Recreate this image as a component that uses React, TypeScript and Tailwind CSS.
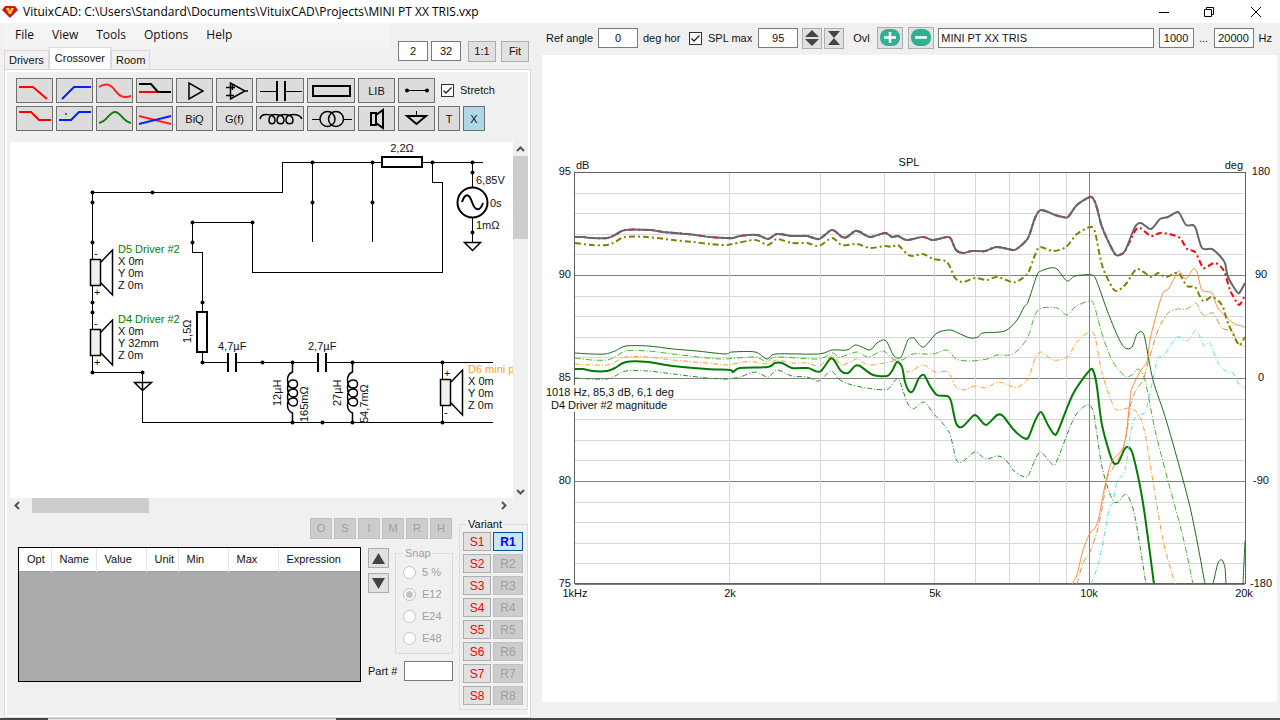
import { useState } from 'react';
import type { ReactNode } from 'react';

type Point = [number, number];

interface Curve {
  name: string;
  color: string;
  width: number;
  dash?: string;
  points: Point[];
}

// Total SPL, everything below the tweeter range is shared with the target curve
const totalBase: Point[] = [
  [575, 237], [583, 237], [592, 238], [607, 238], [615, 235], [625, 230], [650, 230], [663, 232], [687, 234],
  [710, 237], [725, 238], [733, 238], [740, 236], [757, 235], [768, 239], [777, 234], [792, 236], [807, 236],
  [819, 239], [832, 230], [842, 237], [847, 237], [855, 231], [860, 232], [870, 237], [885, 233], [892, 237],
  [898, 236], [907, 240], [923, 237], [933, 240], [947, 237], [951, 239], [956, 250], [963, 253], [972, 251],
  [985, 251], [997, 247], [1013, 250], [1018, 248], [1028, 238], [1035, 218], [1041, 210], [1055, 215],
  [1063, 217], [1068, 217], [1077, 205], [1090, 197], [1094, 200], [1097, 208], [1102, 227], [1112, 249],
  [1116, 255], [1119, 255], [1125, 251],
];

const curves: Curve[] = [
  {
    name: 'lower-off-axis', color: '#2a8f2a', width: 1, dash: '5 2 1 2',
    points: [
      [575, 378], [592, 379], [607, 379], [615, 376], [626, 371], [648, 371], [673, 374], [707, 378], [727, 379],
      [740, 377], [755, 372], [768, 377], [777, 370], [792, 376], [807, 377], [819, 381], [831, 371], [840, 380],
      [852, 385], [873, 389], [888, 389], [898, 379], [907, 402], [913, 409], [924, 402], [933, 413], [949, 432],
      [956, 459], [962, 462], [975, 452], [986, 459], [997, 456], [1005, 459], [1013, 470], [1022, 476],
      [1028, 476], [1035, 460], [1041, 452], [1053, 465], [1058, 458], [1073, 420], [1082, 408], [1089, 405],
      [1094, 415], [1102, 467], [1112, 499], [1118, 502], [1124, 495], [1128, 496], [1135, 517], [1146, 584],
    ],
  },
  {
    name: 'orange-off-axis', color: '#ff9a2e', width: 1, dash: '5 2 1 2',
    points: [
      [575, 364], [592, 365], [607, 365], [615, 362], [626, 357], [648, 357], [673, 360], [707, 363], [727, 365],
      [743, 362], [755, 362], [768, 364], [777, 360], [792, 363], [807, 363], [819, 366], [832, 356], [842, 365],
      [857, 359], [868, 365], [885, 363], [898, 361], [908, 372], [923, 365], [935, 372], [948, 372], [955, 386],
      [963, 390], [975, 386], [986, 388], [998, 382], [1013, 387], [1018, 387], [1028, 379], [1035, 359],
      [1041, 352], [1053, 360], [1067, 357], [1077, 342], [1089, 332], [1095, 337], [1102, 373], [1113, 405],
      [1118, 410], [1130, 408], [1139, 415], [1145, 433], [1150, 463], [1163, 540], [1175, 584],
    ],
  },
  {
    name: 'light-green', color: '#4caf30', width: 1, dash: '6 2 1 2',
    points: [
      [575, 358], [592, 360], [607, 360], [615, 357], [626, 351], [648, 351], [673, 354], [707, 358], [725, 359],
      [755, 357], [767, 362], [776, 357], [818, 359], [832, 353], [840, 357], [857, 352], [868, 357], [883, 351],
      [893, 359], [902, 360], [913, 354], [933, 354], [947, 350], [956, 359], [970, 361], [987, 359], [997, 355],
      [1010, 355], [1018, 350], [1028, 337], [1035, 315], [1042, 308], [1057, 308], [1067, 315], [1075, 307],
      [1089, 301], [1094, 305], [1103, 337], [1113, 362], [1125, 376], [1132, 375], [1138, 369], [1145, 380],
      [1155, 430], [1167, 477], [1183, 537], [1193, 584],
    ],
  },
  {
    name: 'dark-green', color: '#1b6b1b', width: 1,
    points: [
      [575, 353], [592, 354], [605, 354], [615, 351], [626, 346], [648, 346], [673, 349], [697, 351], [725, 354],
      [732, 352], [755, 352], [767, 359], [776, 354], [818, 354], [832, 350], [847, 350], [855, 345], [862, 347],
      [870, 350], [877, 343], [883, 340], [887, 342], [894, 356], [901, 357], [908, 340], [914, 338], [917, 342],
      [924, 347], [937, 333], [950, 330], [958, 333], [970, 338], [978, 337], [983, 333], [1005, 331],
      [1017, 320], [1024, 307], [1028, 302], [1037, 275], [1041, 271], [1050, 268], [1057, 269], [1067, 281],
      [1075, 276], [1092, 275], [1097, 282], [1107, 310], [1118, 337], [1125, 348], [1132, 347], [1137, 334],
      [1142, 332], [1145, 339], [1153, 380], [1167, 423], [1190, 507], [1205, 584],
    ],
  },
  {
    name: 'dark-green-lobe', color: '#1b6b1b', width: 1,
    points: [[1213, 584], [1218, 563], [1222, 560], [1225, 568], [1226, 584]],
  },
  { name: 'dark-green-edge', color: '#1b6b1b', width: 1, points: [[1243, 584], [1245, 541]] },
  {
    name: 'D4 Driver #2 magnitude', color: '#007d00', width: 2,
    points: [
      [575, 369], [583, 369], [592, 371], [607, 371], [615, 368], [626, 362], [648, 362], [673, 366], [707, 369],
      [730, 370], [733, 372], [740, 368], [768, 367], [775, 363], [782, 363], [792, 368], [808, 368], [815, 371],
      [821, 371], [830, 359], [834, 360], [841, 371], [848, 373], [855, 366], [860, 366], [873, 375], [887, 376],
      [892, 371], [897, 362], [902, 367], [905, 382], [909, 391], [913, 391], [919, 378], [924, 375], [930, 386],
      [937, 395], [947, 396], [951, 401], [956, 423], [962, 427], [973, 416], [977, 416], [986, 425], [997, 415],
      [1003, 416], [1013, 429], [1022, 437], [1028, 438], [1035, 421], [1041, 412], [1048, 425], [1054, 434],
      [1058, 431], [1073, 394], [1090, 370], [1094, 373], [1097, 387], [1102, 425], [1112, 460], [1118, 463],
      [1124, 450], [1128, 447], [1133, 455], [1143, 503], [1154, 584],
    ],
  },
  {
    name: 'cyan-off-axis', color: '#5ee0dc', width: 1, dash: '5 2 1 2',
    points: [
      [1091, 584], [1098, 565], [1104, 537], [1109, 510], [1113, 502], [1117, 482], [1125, 470], [1130, 437],
      [1135, 418], [1145, 412], [1150, 393], [1155, 370], [1158, 358], [1165, 354], [1177, 337], [1187, 341],
      [1196, 330], [1200, 337], [1204, 346], [1210, 343], [1218, 363], [1227, 372], [1233, 373], [1238, 383],
      [1245, 388],
    ],
  },
  {
    name: 'tan-off-axis', color: '#c8963c', width: 1, dash: '6 2 1 2',
    points: [
      [1077, 584], [1083, 563], [1090, 552], [1098, 528], [1104, 497], [1107, 478], [1113, 468], [1122, 452],
      [1127, 432], [1130, 407], [1135, 392], [1143, 380], [1148, 363], [1157, 333], [1162, 322], [1168, 313],
      [1177, 309], [1187, 309], [1196, 303], [1200, 311], [1205, 316], [1213, 313], [1222, 328], [1232, 331],
      [1238, 343], [1245, 347],
    ],
  },
  {
    name: 'tweeter', color: '#ff8c42', width: 1,
    points: [
      [1072, 584], [1077, 575], [1083, 550], [1090, 533], [1095, 528], [1099, 517], [1103, 495], [1107, 477],
      [1112, 461], [1122, 450], [1126, 435], [1130, 400], [1132, 388], [1141, 370], [1147, 362], [1150, 340],
      [1157, 312], [1163, 293], [1169, 288], [1177, 273], [1180, 272], [1186, 279], [1193, 269], [1197, 272],
      [1202, 290], [1212, 293], [1218, 308], [1233, 323], [1242, 326], [1245, 328],
    ],
  },
  {
    name: 'olive', color: '#808000', width: 2, dash: '6 3 2 3',
    points: [
      [575, 243], [592, 245], [607, 245], [615, 242], [625, 237], [647, 237], [673, 240], [693, 242], [710, 244],
      [725, 245], [733, 244], [755, 240], [768, 245], [777, 239], [792, 243], [807, 243], [819, 246], [832, 238],
      [842, 245], [857, 244], [870, 248], [885, 246], [892, 247], [898, 245], [907, 254], [913, 256], [923, 254],
      [933, 259], [947, 262], [955, 278], [963, 282], [975, 278], [987, 280], [997, 277], [1012, 282],
      [1018, 281], [1028, 273], [1035, 255], [1040, 247], [1053, 251], [1066, 247], [1077, 234], [1090, 227],
      [1095, 232], [1102, 265], [1112, 287], [1117, 291], [1126, 284], [1137, 269], [1151, 277], [1158, 273],
      [1166, 277], [1178, 273], [1187, 286], [1195, 287], [1203, 301], [1212, 297], [1222, 305], [1228, 323],
      [1237, 342], [1240, 345], [1245, 337],
    ],
  },
  {
    name: 'target', color: '#f00', width: 2, dash: '6 3 2 3',
    points: [
      ...totalBase,
      [1135, 231], [1140, 228], [1151, 236], [1160, 233], [1169, 234], [1180, 238], [1187, 249], [1195, 252],
      [1202, 266], [1205, 268], [1215, 263], [1224, 271], [1230, 290], [1238, 304], [1241, 303], [1245, 295],
    ],
  },
  {
    name: 'total', color: '#666670', width: 2,
    points: [
      ...totalBase,
      [1135, 227], [1141, 223], [1151, 229], [1160, 219], [1168, 217], [1177, 212], [1180, 214], [1186, 225],
      [1193, 225], [1196, 229], [1202, 248], [1212, 249], [1220, 256], [1225, 263], [1228, 277], [1237, 292],
      [1240, 292], [1245, 283],
    ],
  },
];

function toPath(points: Point[]) {
  let d = `M${points[0][0]} ${points[0][1]}`;
  for (let i = 0; i < points.length - 1; i++) {
    const [x0, y0] = points[Math.max(0, i - 1)];
    const [x1, y1] = points[i];
    const [x2, y2] = points[i + 1];
    const [x3, y3] = points[Math.min(points.length - 1, i + 2)];
    d += ` C${x1 + (x2 - x0) / 7} ${y1 + (y2 - y0) / 7} ${x2 - (x3 - x1) / 7} ${y2 - (y3 - y1) / 7} ${x2} ${y2}`;
  }
  return d;
}

const freqX = (khz: number) => Math.floor((Math.log(khz) / Math.log(20)) * 671) + 574.5;
const gridFreqs = [2, 3, 4, 5, 6, 7, 8, 9, 10];
const gridRows = Array.from({ length: 21 }, (_, i) => i);

function SplChart() {
  return (
    <svg viewBox="542 55 735 647" className="block w-full h-auto bg-white text-[11px]" role="img" aria-label="SPL">
      <g shapeRendering="crispEdges">
        {gridRows.map((i) => (
          <path key={i} d={`M575 ${Math.round(i * 20.6) + 172.5}H1245`} stroke={i % 5 === 0 ? '#808080' : '#d8d8d8'} />
        ))}
        {gridFreqs.map((f) => (
          <path key={f} d={`M${freqX(f)} 173V584`} stroke={f === 10 ? '#808080' : '#d8d8d8'} />
        ))}
        <rect x="574.5" y="172.5" width="671" height="411" fill="none" stroke="#606060" />
      </g>
      {curves.map((c) => (
        <path key={c.name} d={toPath(c.points)} fill="none" stroke={c.color} strokeWidth={c.width} strokeDasharray={c.dash} />
      ))}
      <path d="M545 385H676V399H664V412H550V399H545z" fill="#fff" />
      <g fill="#111">
        <text x="546" y="396">1018 Hz, 85,3 dB, 6,1 deg</text>
        <text x="551" y="409">D4 Driver #2 magnitude</text>
        <text x="909" y="166" textAnchor="middle">SPL</text>
        <text x="576" y="169">dB</text>
        <text x="1243" y="169" textAnchor="end">deg</text>
        <g textAnchor="end">
          <text x="571" y="175">95</text>
          <text x="571" y="278">90</text>
          <text x="571" y="381">85</text>
          <text x="571" y="484">80</text>
          <text x="571" y="587">75</text>
        </g>
        <g textAnchor="middle">
          <text x="1261" y="175">180</text>
          <text x="1261" y="278">90</text>
          <text x="1261" y="381">0</text>
          <text x="1261" y="484">-90</text>
          <text x="1261" y="587">-180</text>
          <text x="575" y="597">1kHz</text>
          <text x="730" y="597">2k</text>
          <text x="935" y="597">5k</text>
          <text x="1089" y="597">10k</text>
          <text x="1244" y="597">20k</text>
        </g>
      </g>
    </svg>
  );
}

const dots: Point[] = [
  [92, 192], [152, 192], [92, 202], [92, 242], [92, 302], [92, 312], [92, 372], [142, 372], [192, 222], [252, 222],
  [192, 242], [202, 302], [202, 362], [262, 362], [312, 162], [312, 202], [372, 162], [372, 202], [432, 162],
  [472, 162], [472, 172], [472, 232], [292, 362], [352, 362], [442, 362], [292, 422], [322, 422], [352, 422], [442, 422],
];

interface SpeakerProps {
  x: number;
  y: number;
  name: string;
  color: string;
  offset: string;
  top: string;
  bottom: string;
}

function Speaker({ x, y, name, color, offset, top, bottom }: SpeakerProps) {
  return (
    <g>
      <rect x={x - 1.5} y={y - 12.5} width="10" height="26" fill="#f0f0f0" stroke="#000" strokeWidth="1.5" />
      <path d={`M${x + 9} ${y - 10}L${x + 20.5} ${y - 22}V${y + 23}L${x + 9} ${y + 11}`} fill="none" stroke="#000" strokeWidth="1.5" />
      <text x={x + 2} y={y - 15}>{top}</text>
      <text x={x + 2} y={y + 24}>{bottom}</text>
      <text x={x + 26} y={y - 19} fill={color}>{name}</text>
      <text x={x + 26} y={y - 7}>X 0m</text>
      <text x={x + 26} y={y + 5}>Y {offset}</text>
      <text x={x + 26} y={y + 17}>Z 0m</text>
    </g>
  );
}

function Inductor({ x }: { x: number }) {
  return (
    <path
      transform={`translate(${x} 362)`}
      d="M0.5 0V10Q-4.500 12 -4.500 18C-4.500 25 -1 26 1 26C7 26 7 18 1 18C-3 18 -4.500 21 -4.500 26C-4.500 33 -1 35 1 35C7 35 7 27 1 27C-3 27 -4.500 30 -4.500 35C-4.500 42 -1 44 1 44C7 44 7 36 1 36C-3 36 -4.500 39 -4.500 43Q-4.500 49 0.500 51V60"
      fill="none"
      stroke="#000"
      strokeWidth="1.5"
    />
  );
}

function Schematic() {
  return (
    <svg viewBox="10 142 503 356" className="block w-full h-auto bg-white text-[11px]" role="img" aria-label="Crossover schematic">
      <g fill="none" stroke="#000" shapeRendering="crispEdges">
        <path d="M92.5 372V192.5H282.5V162.5H381M423 162.5H483" />
        <path d="M312.5 162V242M372.5 162V242M432.5 162V182.5H442.5V272.5H252.5V222.5H192.5V252.5H202.5V362.5H227" />
        <path d="M92 372.5H142.5V422.5H493M237 362.5H317M327 362.5H493M442.5 362V422" />
        <path d="M472.5 162V243" />
      </g>
      <rect x="382" y="157" width="40" height="10" fill="#fff" stroke="#000" strokeWidth="2" />
      <rect x="197" y="312" width="10" height="40" fill="#fff" stroke="#000" strokeWidth="2" />
      <path d="M228 353V372M236 353V372M318 353V372M326 353V372" stroke="#000" strokeWidth="2" />
      <Inductor x={292} />
      <Inductor x={352} />
      <circle cx="472.5" cy="202.5" r="15" fill="#fff" stroke="#000" strokeWidth="2" />
      <path d="M462 202C465 193 469 193 472 202S480 212 483 203" fill="none" stroke="#000" strokeWidth="2" />
      <path d="M464.5 242.5H480.5L472.5 250.5z" fill="#fff" stroke="#000" strokeWidth="1.5" />
      <path d="M134.5 382.5H151.5L142.5 390.5zM142.5 382V391" fill="none" stroke="#000" strokeWidth="1.5" />
      {dots.map(([x, y]) => (
        <circle key={`${x}-${y}`} cx={x + 0.5} cy={y + 0.5} r="2" />
      ))}
      <g fill="#111">
        <Speaker x={92} y={272} name="D5 Driver #2" color="#008000" offset="0m" top="-" bottom="+" />
        <Speaker x={92} y={342} name="D4 Driver #2" color="#008000" offset="32mm" top="-" bottom="+" />
        <Speaker x={442} y={392} name="D6 mini p" color="#ffa030" offset="0m" top="+" bottom="-" />
        <text x="402" y="152" textAnchor="middle">2,2Ω</text>
        <text x="476" y="184">6,85V</text>
        <text x="490" y="207">0s</text>
        <text x="476" y="229">1mΩ</text>
        <text x="218" y="350">4,7µF</text>
        <text x="308" y="350">2,7µF</text>
        <text transform="translate(191 343) rotate(-90)">1,5Ω</text>
        <text transform="translate(281 406) rotate(-90)">12µH</text>
        <text transform="translate(308 422) rotate(-90)">165mΩ</text>
        <text transform="translate(341 406) rotate(-90)">27µH</text>
        <text transform="translate(368 423) rotate(-90)">54,7mΩ</text>
      </g>
    </svg>
  );
}

function Glyph({ wide, children }: { wide?: boolean; children: ReactNode }) {
  return (
    <svg
      viewBox={wide ? '0 0 46 23' : '0 0 35 23'}
      className={wide ? 'w-[46px] h-[23px]' : 'w-[35px] h-[23px]'}
      fill="none"
      stroke="#000"
      strokeWidth="2"
    >
      {children}
    </svg>
  );
}

interface Tool {
  label: string;
  size: 'sm' | 'md' | 'lg';
  active?: boolean;
  icon?: ReactNode;
}

const toolRows: Tool[][] = [
  [
    { label: 'Low pass', size: 'md', icon: <Glyph><path d="M2 8H16L30 20" stroke="#f00" /></Glyph> },
    { label: 'High pass', size: 'md', icon: <Glyph><path d="M5 20L17 8H34" stroke="#0020ff" /></Glyph> },
    { label: 'All pass', size: 'md', icon: <Glyph><path d="M2 8C8 4 13 5 17 10S24 20 34 17" stroke="#ff2020" /></Glyph> },
    { label: 'Shelf', size: 'md', icon: <Glyph><path d="M2 13H21" stroke="#f00" /><path d="M2 5H14L21 13H34" /></Glyph> },
    { label: 'Buffer', size: 'md', icon: <Glyph><path d="M12 4V20L26 12z" strokeWidth="1.5" /></Glyph> },
    {
      label: 'Op amp', size: 'md',
      icon: <Glyph><path d="M13.5 4V20L28 12zM9 8.5H18M15.5 6V11M9 16.5H17M28 12H31" strokeWidth="1.5" /></Glyph>,
    },
    { label: 'Capacitor', size: 'lg', icon: <Glyph wide><path d="M3 12.5H20M28 12.5H45" strokeWidth="1" /><path d="M20 2V22M28 2V22" /></Glyph> },
    { label: 'Resistor', size: 'lg', icon: <Glyph wide><rect x="5" y="7" width="37" height="10" /></Glyph> },
    { label: 'LIB', size: 'md' },
    {
      label: 'Wire', size: 'md',
      icon: <Glyph><path d="M8 11.5H28" strokeWidth="1" /><circle cx="8" cy="11.5" r="1" /><circle cx="28" cy="11.5" r="1" /></Glyph>,
    },
  ],
  [
    { label: 'Low shelf', size: 'md', icon: <Glyph><path d="M2 5H14L22 13H34" stroke="#f00" /></Glyph> },
    { label: 'High shelf', size: 'md', icon: <Glyph><path d="M2 13H14L22 5H34" stroke="#0020ff" /><path d="M8 7H10" stroke="#666" /></Glyph> },
    { label: 'Peak', size: 'md', icon: <Glyph><path d="M2 16C11 14 12 5 18 5S25 14 34 16" stroke="#108010" /></Glyph> },
    { label: 'Linkwitz', size: 'md', icon: <Glyph><path d="M2 9L34 17" stroke="#ff2020" /><path d="M2 17L34 9" stroke="#1020ff" /></Glyph> },
    { label: 'BiQ', size: 'md' },
    { label: 'G(f)', size: 'md' },
    {
      label: 'Coil', size: 'lg',
      icon: (
        <Glyph wide>
          <path
            d="M3 12Q4 7.500 9 7.500C16 7.500 18 10 18 13C18 18 12 18 12 13C12 9 14 7.500 18 7.500C25 7.500 27 10 27 13C27 18 20 18 20 13C20 9 23 7.500 27 7.500C34 7.500 36 10 36 13C36 18 29 18 29 13C29 9 32 7.500 36 7.500Q43 7.500 45 12"
            strokeWidth="1.5"
          />
        </Glyph>
      ),
    },
    {
      label: 'Transformer', size: 'lg',
      icon: (
        <Glyph wide>
          <path d="M4 12.5H12M36 12.5H44" strokeWidth="1" />
          <circle cx="19.5" cy="12" r="7.5" strokeWidth="1.5" />
          <circle cx="28" cy="12" r="7.5" strokeWidth="1.5" />
        </Glyph>
      ),
    },
    { label: 'Speaker', size: 'md', icon: <Glyph><path d="M12 6H17V18H12zM17 8L24 3V21L17 16" /></Glyph> },
    { label: 'Ground', size: 'md', icon: <Glyph><path d="M17.5 4V8" strokeWidth="1" /><path d="M8 9H27L17.5 17z" /></Glyph> },
    { label: 'T', size: 'sm' },
    { label: 'X', size: 'sm', active: true },
  ],
];

const toolWidths = { sm: 'w-[22px]', md: 'w-[37px]', lg: 'w-[48px]' };

function ToolButton({ tool }: { tool: Tool }) {
  return (
    <button
      aria-label={tool.label}
      className={`flex items-center justify-center h-[25px] border border-[#707070] ${toolWidths[tool.size]} ${
        tool.active ? 'bg-[#add8e6]' : 'bg-[#dcdcdc]'
      }`}
    >
      {tool.icon ?? <span className="pt-0.5">{tool.label}</span>}
    </button>
  );
}

function CheckBox({ label }: { label: string }) {
  const [checked, setChecked] = useState(true);

  return (
    <label className="flex items-center gap-1.5">
      <span className="relative block w-[13px] h-[13px]">
        <input
          type="checkbox"
          checked={checked}
          onChange={() => setChecked(!checked)}
          className="block appearance-none w-[13px] h-[13px] border border-[#333] bg-white"
        />
        {checked && (
          <svg viewBox="0 0 13 13" className="absolute inset-0 pointer-events-none" fill="none" stroke="#222" strokeWidth="1.3">
            <path d="M2.5 6.5L5 9L10.5 3.5" />
          </svg>
        )}
      </span>
      {label}
    </label>
  );
}

function ScrollArrow({ label, d }: { label: string; d: string }) {
  return (
    <button aria-label={label} className="flex items-center justify-center w-[15px] h-3.5">
      <svg viewBox="0 0 9 9" className="w-[9px] h-[9px]" fill="none" stroke="#555" strokeWidth="2">
        <path d={d} />
      </svg>
    </button>
  );
}

const fieldClass = 'h-5 border border-[#7a7a7a] bg-white text-center';
const grayButton = 'flex items-center justify-center border border-[#adadad] bg-[#e1e1e1]';
const offButton = 'flex items-center justify-center border border-[#bfbfbf] bg-[#ccc] text-[#a0a0a0]';

function TitleBar() {
  return (
    <header className="flex items-center h-[23px] pl-[2px] bg-white text-black">
      <svg viewBox="0 0 16 14" className="w-4 h-3.5">
        <path d="M3 1H13L16 5L8 13L0 5z" fill="#d01818" />
        <path d="M4 3H12L9 9H7z" fill="#ffd030" />
        <path d="M7 3H9L8 6z" fill="#d01818" />
      </svg>
      <h1 className="ml-[5px] font-['Open_Sans',sans-serif] text-xs whitespace-nowrap">
        VituixCAD: C:\Users\Standard\Documents\VituixCAD\Projects\MINI PT XX TRIS.vxp
      </h1>
      <div className="flex ml-auto h-full">
        <button aria-label="Minimize" className="flex items-center justify-center w-[45px]">
          <svg viewBox="0 0 10 10" className="w-2.5 h-2.5" fill="none" stroke="#000"><path d="M0 5.5H10" /></svg>
        </button>
        <button aria-label="Restore" className="flex items-center justify-center w-[46px]">
          <svg viewBox="0 0 10 10" className="w-2.5 h-2.5" fill="none" stroke="#000">
            <path d="M0.5 2.5H7.5V9.5H0.5zM2.5 2V0.5H9.5V7.5H8" />
          </svg>
        </button>
        <button aria-label="Close" className="flex items-center justify-center w-[48px]">
          <svg viewBox="0 0 10 10" className="w-2.5 h-2.5" fill="none" stroke="#000"><path d="M0 0L10 10M10 0L0 10" /></svg>
        </button>
      </div>
    </header>
  );
}

function ChartToolbar() {
  return (
    <div className="flex items-center h-8 pl-1 pr-[5px] -mt-px">
      <label htmlFor="angle" className="w-[52px]">Ref angle</label>
      <input id="angle" defaultValue="0" className={`w-10 ${fieldClass}`} />
      <span className="ml-[5px] w-[46px]">deg hor</span>
      <CheckBox label="SPL max" />
      <input aria-label="SPL max value" defaultValue="95" className={`ml-1.5 w-10 ${fieldClass}`} />
      <button aria-label="Expand" className={`ml-1 w-5 h-[21px] ${grayButton}`}>
        <svg viewBox="0 0 14 16" className="w-3.5 h-4" fill="#444"><path d="M7 0L14 7H0zM0 9H14L7 16z" /></svg>
      </button>
      <button aria-label="Compress" className={`ml-0.5 w-5 h-[21px] ${grayButton}`}>
        <svg viewBox="0 0 14 16" className="w-3.5 h-4" fill="#444"><path d="M1 1H13L7 8L13 15H1L7 8z" /></svg>
      </button>
      <span className="ml-[9px] w-6">Ovl</span>
      <button aria-label="Add overlay" className={`w-[26px] h-[22px] ${grayButton}`}>
        <svg viewBox="0 0 20 18" className="w-5 h-[18px]">
          <rect x="0" y="0" width="20" height="17" rx="8" fill="#2fb092" />
          <path d="M4 8.5H16M10 3V14" stroke="#fff" strokeWidth="2.5" />
        </svg>
      </button>
      <button aria-label="Remove overlay" className={`ml-[5px] w-[26px] h-[22px] ${grayButton}`}>
        <svg viewBox="0 0 20 18" className="w-5 h-[18px]">
          <rect x="0" y="0" width="20" height="17" rx="8" fill="#2fb092" />
          <path d="M4 8.5H16" stroke="#fff" strokeWidth="2.5" />
        </svg>
      </button>
      <input
        aria-label="Overlay name"
        defaultValue="MINI PT XX TRIS"
        className="ml-1 h-5 flex-1 min-w-0 border border-[#7a7a7a] bg-white px-0.5"
      />
      <input aria-label="Minimum frequency" defaultValue="1000" className={`ml-[5px] w-[35px] ${fieldClass}`} />
      <span className="w-5 text-center">...</span>
      <input aria-label="Maximum frequency" defaultValue="20000" className={`w-10 ${fieldClass}`} />
      <span className="ml-[5px]">Hz</span>
    </div>
  );
}

const columns = [
  { name: 'Opt', width: 'w-8' },
  { name: 'Name', width: 'w-[45px]' },
  { name: 'Value', width: 'w-[50px]' },
  { name: 'Unit', width: 'w-8' },
  { name: 'Min', width: 'w-[50px]' },
  { name: 'Max', width: 'w-[50px]' },
  { name: 'Expression', width: 'w-auto' },
];

function PartsPanel() {
  const [variant, setVariant] = useState(1);

  return (
    <div className="flex gap-1.5 pt-[5px] pl-[11px]">
      <div className="flex-1">
        <div className="flex justify-end gap-0.5 mr-px">
          {['O', 'S', 'I', 'M', 'R', 'H'].map((key) => (
            <button key={key} disabled className={`w-[22px] h-[21px] ${offButton}`}>{key}</button>
          ))}
        </div>
        <div className="flex gap-[7px] mt-2">
          <div className="flex-1 h-[135px] border border-black bg-[#ababab]">
            <table className="w-full table-fixed border-collapse">
              <thead>
                <tr className="h-[23px] border-b border-[#999] bg-white">
                  {columns.map((col) => (
                    <th
                      key={col.name}
                      className={`${col.width} pl-2 text-left font-normal whitespace-nowrap border-r border-[#e5e5e5] last:border-r-0`}
                    >
                      {col.name}
                    </th>
                  ))}
                </tr>
              </thead>
            </table>
          </div>
          <div className="flex flex-col w-[85px]">
            <div className="flex gap-1.5">
              <div className="flex flex-col gap-[5px] pt-px">
                <button aria-label="Move up" className={`w-[21px] h-5 ${grayButton}`}>
                  <svg viewBox="0 0 13 11" className="w-[13px] h-[11px]" fill="#444"><path d="M0 11L6.5 0L13 11z" /></svg>
                </button>
                <button aria-label="Move down" className={`w-[21px] h-5 ${grayButton}`}>
                  <svg viewBox="0 0 13 11" className="w-[13px] h-[11px]" fill="#444"><path d="M0 0H13L6.5 11z" /></svg>
                </button>
              </div>
              <fieldset disabled className="w-[58px] h-[107px] px-[7px] border border-[#dcdcdc] text-[#a0a0a0]">
                <legend className="px-0.5 leading-[13px]">Snap</legend>
                <div className="flex flex-col gap-[9px] pt-1.5">
                  {['5 %', 'E12', 'E24', 'E48'].map((series) => (
                    <label key={series} className="flex items-center gap-1.5 leading-[13px] whitespace-nowrap">
                      <input
                        type="radio"
                        name="snap"
                        defaultChecked={series === 'E12'}
                        className="appearance-none w-[13px] h-[13px] rounded-full border border-[#c4c4c4] bg-white checked:bg-[#c4c4c4] checked:shadow-[inset_0_0_0_2px_white]"
                      />
                      {series}
                    </label>
                  ))}
                </div>
              </fieldset>
            </div>
            <div className="flex items-center mt-[7px]">
              <label htmlFor="part" className="w-9 whitespace-nowrap">Part #</label>
              <input id="part" className="w-[49px] h-5 border border-[#7a7a7a] bg-white" />
            </div>
          </div>
        </div>
      </div>
      <fieldset className="w-[69px] h-[192px] pl-[3px] border border-[#dcdcdc]">
        <legend className="ml-[3px] px-0.5 leading-[13px]">Variant</legend>
        <div className="grid grid-cols-[28px_30px] gap-x-0.5 gap-y-[3px] pt-px">
          {[1, 2, 3, 4, 5, 6, 7, 8].map((n) => (
            <div key={n} className="contents">
              <button onClick={() => setVariant(n)} className={`h-[19px] text-xs text-[#f00] ${grayButton}`}>S{n}</button>
              {n === variant ? (
                <button className="h-[19px] border border-[#005499] bg-[#cce4f7] text-xs leading-none font-bold text-[#00f]">R{n}</button>
              ) : (
                <button disabled className={`h-[19px] text-xs ${offButton}`}>R{n}</button>
              )}
            </div>
          ))}
        </div>
      </fieldset>
    </div>
  );
}

export default function App() {
  const [tab, setTab] = useState('Crossover');

  return (
    <div className="flex flex-col min-h-screen bg-[#f0f0f0] font-['Liberation_Sans',Arial,sans-serif] text-[11px] text-[#111]">
      <TitleBar />
      <main className="flex flex-1">
        <section className="flex flex-col w-[531px] shrink-0 pl-1">
          <div className="flex">
            <div className="flex flex-col w-[387px]">
              <nav className="flex h-6 pl-[11px] gap-[18px] items-center bg-[#f4f4f4] font-['Open_Sans',sans-serif] text-xs">
                {['File', 'View', 'Tools', 'Options', 'Help'].map((item) => (
                  <button key={item}>{item}</button>
                ))}
              </nav>
              <div className="flex items-end h-[22px]">
                {['Drivers', 'Crossover', 'Room'].map((name) => (
                  <button
                    key={name}
                    onClick={() => setTab(name)}
                    className={`border border-b-0 border-[#d9d9d9] ${
                      name === tab ? 'h-[22px] px-[5px] bg-white' : 'h-[19px] px-1 bg-[#f0f0f0]'
                    }`}
                  >
                    {name}
                  </button>
                ))}
              </div>
            </div>
            <div className="flex items-start gap-[3px] pt-[18px] pl-[7px]">
              <input aria-label="Grid" defaultValue="2" className={`w-[30px] ${fieldClass}`} />
              <input aria-label="Cells" defaultValue="32" className={`w-[30px] ${fieldClass}`} />
              <button className={`ml-1 w-7 h-[21px] ${grayButton}`}>1:1</button>
              <button className={`ml-0.5 w-7 h-[21px] ${grayButton}`}>Fit</button>
            </div>
          </div>
          <div className="flex-1 border border-[#d9d9d9] bg-white p-0.5">
            <div className="h-full bg-[#f0f0f0] pt-1.5">
              <div className="flex flex-col gap-[3px] pl-[9px]">
                {toolRows.map((row, i) => (
                  <div key={i} className="flex items-center gap-[3px]">
                    {row.map((tool) => (
                      <ToolButton key={tool.label} tool={tool} />
                    ))}
                    {i === 0 && (
                      <div className="ml-[3px]">
                        <CheckBox label="Stretch" />
                      </div>
                    )}
                  </div>
                ))}
              </div>
              <div className="flex mt-[11px] pl-[3px]">
                <div className="flex-1 min-w-0">
                  <Schematic />
                </div>
                <div className="flex flex-col w-[15px]">
                  <ScrollArrow label="Scroll up" d="M1 6L4.5 2.5L8 6" />
                  <div className="w-[15px] h-[83px] bg-[#cdcdcd]" />
                  <div className="flex-1" />
                  <ScrollArrow label="Scroll down" d="M1 3L4.5 6.5L8 3" />
                </div>
              </div>
              <div className="flex items-center h-[15px] pl-[3px] pr-[17px]">
                <ScrollArrow label="Scroll left" d="M6 1L2.5 4.5L6 8" />
                <div className="ml-[7px] w-[117px] h-[15px] bg-[#cdcdcd]" />
                <div className="flex-1" />
                <ScrollArrow label="Scroll right" d="M3 1L6.5 4.5L3 8" />
              </div>
              <PartsPanel />
            </div>
          </div>
        </section>
        <section className="flex-1 min-w-0 pl-[11px] pr-[3px]">
          <ChartToolbar />
          <div className="mt-px">
            <SplChart />
          </div>
        </section>
      </main>
      <footer className="flex h-0.5 bg-[#484646]">
        <div className="ml-12 w-72 bg-[#e8e8e8] border-t border-[#bbb]" />
      </footer>
    </div>
  );
}
